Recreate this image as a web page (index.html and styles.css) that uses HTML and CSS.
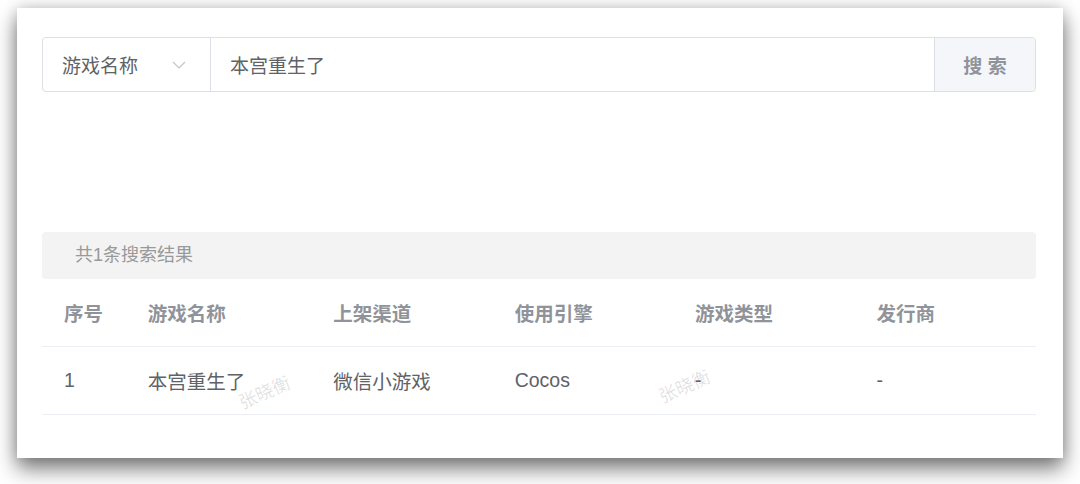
FILE: index.html
```html
<!DOCTYPE html>
<html>
<head>
    <meta charset="UTF-8">
    <title>游戏搜索</title>
    <link rel="stylesheet" href="styles.css">
</head>
<body>
    <div class="window">
        <div class="search-bar">
            <div class="search-type">
                <span>游戏名称</span>
                <svg class="arrow" width="14" height="8" viewBox="0 0 14 8"><path d="M1 1l6 6 6-6" fill="none" stroke="#c0c4cc" stroke-width="1.2"/></svg>
            </div>
            <div class="search-input">本宫重生了</div>
            <div class="search-btn">搜 索</div>
        </div>

        <div class="result-tip">共1条搜索结果</div>

        <div class="table">
            <div class="row head">
                <div class="cell c1">序号</div>
                <div class="cell c2">游戏名称</div>
                <div class="cell">上架渠道</div>
                <div class="cell c4">使用引擎</div>
                <div class="cell">游戏类型</div>
                <div class="cell">发行商</div>
            </div>
            <div class="row">
                <div class="cell c1">1</div>
                <div class="cell c2">本宫重生了</div>
                <div class="cell">微信小游戏</div>
                <div class="cell c4">Cocos</div>
                <div class="cell">-</div>
                <div class="cell">-</div>
            </div>
        </div>

        <!-- 水印 -->
        <span class="mark mark1">张晓衡</span>
        <span class="mark mark2">张晓衡</span>
    </div>
</body>
</html>
```

FILE: styles.css
```css
html,body{
    height:100%;
}
body{
    margin:0;
    background:#fff;
    font-family:"Liberation Sans","Noto Sans CJK SC",sans-serif;
}
.window{
    position:relative;
    box-sizing:border-box;
    width:1046px;
    height:450px;
    margin:8px 0 0 17px;
    padding:29px 27px 0 25px;
    background:#fff;
    box-shadow:0 11px 20px rgba(0,0,0,.5),0 0 14px rgba(0,0,0,.18);
}
.search-bar{
    display:flex;
    height:55px;
    box-sizing:border-box;
    border:1px solid #dcdfe6;
    border-radius:4px;
    color:#606266;
    font-size:19px;
}
.search-type{
    width:168px;
    box-sizing:border-box;
    display:flex;
    align-items:center;
    justify-content:space-between;
    padding:0 24px 0 19px;
    border-right:1px solid #dcdfe6;
}
.search-type .arrow{
    margin-top:1px;
}
.search-input{
    flex:1;
    display:flex;
    align-items:center;
    padding-left:19px;
}
.search-btn{
    width:100px;
    display:flex;
    align-items:center;
    justify-content:center;
    background:#f5f6f9;
    border-left:1px solid #dcdfe6;
    border-radius:0 4px 4px 0;
    color:#909399;
    font-weight:bold;
    font-size:19px;
}
.result-tip{
    margin-top:140px;
    height:47px;
    line-height:47px;
    padding-left:33px;
    background:#f3f3f3;
    border-radius:4px;
    color:#999;
    font-size:18px;
}
.row{
    display:flex;
    height:67px;
    align-items:center;
    border-bottom:1px solid #ebeef5;
    color:#606266;
    font-size:19.5px;
}
.row.head{
    color:#909399;
    font-weight:bold;
}
.cell{
    width:182px;
    box-sizing:border-box;
    padding-left:22px;
}
.cell.c1{
    width:84px;
}
.cell.c2{
    width:186px;
}
.cell.c4{
    width:181px;
}
.mark{
    position:absolute;
    color:rgba(0,0,0,.13);
    font-size:18px;
    transform:rotate(-24deg);
}
.mark1{
    left:220px;
    top:370px;
}
.mark2{
    left:640px;
    top:364px;
}
```
